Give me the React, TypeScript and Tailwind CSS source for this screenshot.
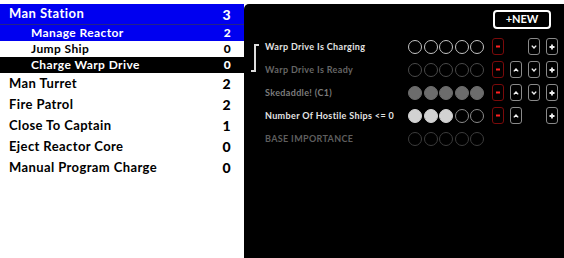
import React from "react";

type Task = { name: string; count: number };

const mainTasks: Task[] = [
  { name: "Man Turret", count: 2 },
  { name: "Fire Patrol", count: 2 },
  { name: "Close To Captain", count: 1 },
  { name: "Eject Reactor Core", count: 0 },
  { name: "Manual Program Charge", count: 0 },
];

type Dot = "on" | "off" | "dim" | "fill" | "bright" | "faint";

interface Rule {
  label: string;
  labelClass: string;
  dots: Dot[];
  buttons: (null | "minus" | "up" | "down" | "star")[];
}

const rules: Rule[] = [
  {
    label: "Warp Drive Is Charging",
    labelClass: "text-[#e4e4e4]",
    dots: ["on", "on", "on", "on", "on"],
    buttons: ["minus", null, "down", "star"],
  },
  {
    label: "Warp Drive Is Ready",
    labelClass: "text-[#666666]",
    dots: ["dim", "dim", "dim", "dim", "dim"],
    buttons: ["minus", "up", "down", "star"],
  },
  {
    label: "Skedaddle! (C1)",
    labelClass: "text-[#7c7c7c]",
    dots: ["fill", "fill", "fill", "fill", "fill"],
    buttons: ["minus", "up", "down", "star"],
  },
  {
    label: "Number Of Hostile Ships <= 0",
    labelClass: "text-[#e4e4e4]",
    dots: ["bright", "bright", "bright", "off", "off"],
    buttons: ["minus", "up", null, "star"],
  },
  {
    label: "BASE IMPORTANCE",
    labelClass: "text-[#5e5e5e]",
    dots: ["faint", "faint", "faint", "faint", "faint"],
    buttons: [],
  },
];

const dotClass: Record<Dot, string> = {
  on: "border-[#c4c4c4]",
  dim: "border-[#4a4a4a]",
  fill: "border-[#6c6c6c] bg-[#6c6c6c]",
  bright: "border-[#d2d2d2] bg-[#d2d2d2]",
  off: "border-[#8a8a8a]",
  faint: "border-[#3c3c3c]",
};

const Glyph = ({ kind }: { kind: "minus" | "up" | "down" | "star" }) => {
  if (kind === "minus")
    return (
      <svg width="4" height="3" viewBox="0 0 4 3">
        <rect x="0" y="0.5" width="4" height="2" fill="#ff2020" />
      </svg>
    );
  if (kind === "up")
    return (
      <svg width="6" height="4" viewBox="0 0 6 4">
        <path d="M0.8 3.4 L3 1 L5.2 3.4" stroke="#f0f0f0" strokeWidth="1.4" fill="none" />
      </svg>
    );
  if (kind === "down")
    return (
      <svg width="6" height="4" viewBox="0 0 6 4">
        <path d="M0.8 0.6 L3 3 L5.2 0.6" stroke="#f0f0f0" strokeWidth="1.4" fill="none" />
      </svg>
    );
  return (
    <svg width="6" height="6" viewBox="0 0 6 6">
      <path d="M3 0.5 V5.5 M0.5 3 H5.5" stroke="#f0f0f0" strokeWidth="1.8" />
    </svg>
  );
};

const RuleRow = ({ rule }: { rule: Rule }) => (
  <div className="h-[23px] flex items-center">
    <span
      className={`w-[143px] pl-[21px] box-content text-[9px] font-bold leading-none tracking-[0.35px] whitespace-nowrap ${rule.labelClass}`}
    >
      {rule.label}
    </span>
    <div className="flex gap-[1.5px]">
      {rule.dots.map((d, i) => (
        <div key={i} className={`w-[14px] h-[14px] rounded-full border-[1.5px] ${dotClass[d]}`} />
      ))}
    </div>
    <div className="flex gap-[6px] ml-[8px]">
      {rule.buttons.map((b, i) =>
        b === null ? (
          <div key={i} className="w-[12px] h-[17px]" />
        ) : (
          <div
            key={i}
            className={`w-[12px] h-[17px] rounded-[3px] border-[1.5px] flex items-center justify-center ${
              b === "minus" ? "border-[#7a0a0a]" : "border-[#8a8a8a]"
            }`}
          >
            <Glyph kind={b} />
          </div>
        )
      )}
    </div>
  </div>
);

export default function App() {
  return (
    <div
      className="w-[564px] h-[258px] flex bg-white overflow-hidden"
      style={{ fontFamily: "Lato, 'Open Sans', sans-serif" }}
    >
      <div className="w-[244px] pt-[4px] flex flex-col font-bold">
        <div className="h-[20px] bg-[#0000f0] text-white flex items-center justify-between pl-[9px] pr-[13px] text-[13px] tracking-[0.45px] border-b border-[#22228a] box-content">
          <span>Man Station</span>
          <span className="font-black text-[14px]">3</span>
        </div>
        <div className="h-[16px] bg-[#0000f0] text-white flex items-center justify-between pl-[31px] pr-[13px] text-[12px] tracking-[0.4px]">
          <span>Manage Reactor</span>
          <span className="font-black">2</span>
        </div>
        <div className="h-[16px] bg-white text-black flex items-center justify-between pl-[31px] pr-[13px] text-[12px] tracking-[0.4px]">
          <span>Jump Ship</span>
          <span className="font-black">0</span>
        </div>
        <div className="h-[16px] bg-black text-white flex items-center justify-between pl-[31px] pr-[13px] text-[12px] tracking-[0.4px]">
          <span>Charge Warp Drive</span>
          <span className="font-black">0</span>
        </div>
        {mainTasks.map((t) => (
          <div
            key={t.name}
            className="h-[21px] flex items-center justify-between pl-[9px] pr-[13px] text-[13px] tracking-[0.4px] text-black"
          >
            <span>{t.name}</span>
            <span className="font-black text-[14px]">{t.count}</span>
          </div>
        ))}
      </div>

      <div className="flex-1 mt-[4px] bg-black rounded-tl-[5px] flex flex-col">
        <div className="flex justify-end pt-[6px] pr-[13px]">
          <button className="w-[58px] h-[19px] rounded-[4px] border-2 border-white text-white text-[11px] font-bold flex items-center justify-center">
            +NEW
          </button>
        </div>
        <div className="mt-[6px] flex flex-col">
          <div className="relative">
            <svg className="absolute left-[7px] top-[9px]" width="8" height="28" viewBox="0 0 8 28">
              <path d="M8 1 H4 V27 H0" stroke="#dcdcdc" strokeWidth="2" fill="none" />
            </svg>
            <RuleRow rule={rules[0]} />
            <RuleRow rule={rules[1]} />
          </div>
          {rules.slice(2).map((r) => (
            <RuleRow key={r.label} rule={r} />
          ))}
        </div>
      </div>
    </div>
  );
}
